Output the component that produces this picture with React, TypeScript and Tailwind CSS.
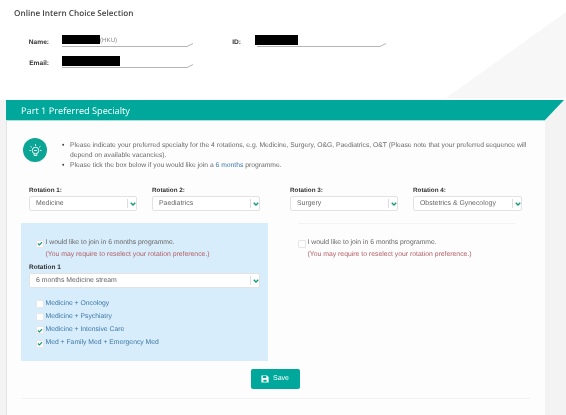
const sans = "font-['Liberation_Sans',Arial,sans-serif]";

function Check({ on, white = true }: { on?: boolean; white?: boolean }) {
  return (
    <span className={`flex h-2 w-2 shrink-0 items-center justify-center rounded-[1px] border border-[#e6e6e6] ${white ? "bg-white" : "bg-[#fdfdfd]"}`}>
      {on && (
        <svg viewBox="0 0 8 8" className="h-[7px] w-[7px]">
          <path d="M1.2 4 L3.2 5.8 L6.8 2.2" fill="none" stroke="#0b9b78" strokeWidth="1.6" />
        </svg>
      )}
    </span>
  );
}

function Select({ value, className }: { value: string; className: string }) {
  return (
    <div className={`flex h-[15px] items-center rounded-[2px] border border-[#e2e2e2] bg-white pl-[6px] text-[6.9px] leading-[13px] text-[#666] ${className}`}>
      <span className="flex-1 truncate">{value}</span>
      <span className="flex h-[9px] w-[9px] items-center justify-center border-l border-[#ddd]">
        <svg viewBox="0 0 8 8" className="ml-[1px] h-[6px] w-[6px]">
          <path d="M1 2.4 L4 5.4 L7 2.4" fill="none" stroke="#0b9b78" strokeWidth="1.8" />
        </svg>
      </span>
    </div>
  );
}

function Rotation({ label, value, className }: { label: string; value: string; className: string }) {
  return (
    <div className={className}>
      <div className="mb-[1px] h-[9px] text-[6.3px] font-bold leading-[10px] text-[#333]">{label}</div>
      <Select value={value} className="w-full" />
    </div>
  );
}

function Info({ label, labelClass, fieldClass, children }: { label: string; labelClass: string; fieldClass: string; children: React.ReactNode }) {
  return (
    <div className="flex items-start">
      <span className={`pt-[2px] text-right text-[6.6px] font-bold leading-[9px] text-[#333] ${labelClass}`}>{label}</span>
      <div className={`relative h-[11px] border-b border-[#b5b5b5] ${fieldClass}`}>
        {children}
        <svg viewBox="0 0 6 4" className="absolute -right-[6px] -bottom-[1px] h-1 w-[6px]">
          <path d="M0 3.5 L6 0.5" stroke="#b5b5b5" strokeWidth="1" fill="none" />
        </svg>
      </div>
    </div>
  );
}

function Option({ label, on }: { label: string; on?: boolean }) {
  return (
    <div className="flex h-[13.3px] items-center gap-[1.5px] text-[6.8px] text-[#3d78a8]">
      <Check on={on} />
      <span>{label}</span>
    </div>
  );
}

function Join({ on, white }: { on?: boolean; white?: boolean }) {
  return (
    <>
      <div className="flex h-[11px] items-center gap-[1.5px] text-[6.8px] text-[#666]">
        <Check on={on} white={white} />
        <span>I would like to join in 6 months programme.</span>
      </div>
      <div className="mt-[1px] pl-[9.5px] text-[6.85px] leading-[10px] text-[#b25a5f]">
        (You may require to reselect your rotation preference.)
      </div>
    </>
  );
}

export default function App() {
  return (
    <div className={`relative h-[415px] w-[566px] overflow-hidden bg-[#f3f3f3] blur-[0.3px] [text-rendering:geometricPrecision] ${sans}`}>
      <div className="relative h-[100px] bg-white">
        <svg viewBox="0 0 120 90" preserveAspectRatio="none" className="absolute right-0 top-[12px] h-[88px] w-[120px]">
          <path d="M0 88 L120 0 V88 Z" fill="#f7f7f7" />
        </svg>
        <div className="relative pl-[14px] pt-[8px] font-['Open_Sans',sans-serif] text-[8.2px] font-semibold leading-[11px] text-[#444]">
          Online Intern Choice Selection
        </div>
        <div className="relative mt-[17px] flex pl-[27px]">
          <Info label="Name:" labelClass="w-[22px]" fieldClass="ml-[13px] w-[125px]">
            <span className="absolute left-0 -top-[1px] h-[9px] w-[38px] bg-black" />
            <span className="absolute left-[38px] top-0 text-[6.2px] leading-[9px] text-[#888]">(HKU)</span>
          </Info>
          <div className="ml-[45px]">
            <Info label="ID:" labelClass="w-[9px]" fieldClass="ml-[16px] w-[123px]">
              <span className="absolute -left-[2px] -top-[1px] h-[10px] w-[43px] bg-black" />
            </Info>
          </div>
        </div>
        <div className="relative mt-[10px] pl-[27px]">
          <Info label="Email:" labelClass="w-[22px]" fieldClass="ml-[13px] w-[125px]">
            <span className="absolute left-0 -top-[1px] h-[10px] w-[58px] bg-black" />
          </Info>
        </div>
      </div>

      <div className="ml-[6px] w-[539px] border-l border-[#e4e4e4] bg-[#fdfdfd]">
        <div className="relative -ml-[1px] h-[20px] w-[558px] bg-[#00a89c] pl-[15px] font-['Open_Sans',sans-serif] text-[9.2px] leading-[21px] text-white [clip-path:polygon(0_0,100%_0,96.6%_100%,0_100%)]">
          Part 1 Preferred Specialty
        </div>
        <div className="h-[1px] bg-[#a8e0db]" />

        <div className="flex pl-[16px] pt-[17px]">
          <div className="flex h-6 w-6 shrink-0 items-center justify-center rounded-full bg-[#0aa595]">
            <svg viewBox="0 0 24 24" className="h-[17px] w-[17px]" fill="none" stroke="#fff" strokeWidth="1.3">
              <circle cx="12" cy="12" r="4.6" />
              <path d="M10 16.5 V19 H14 V16.5 M10 12 H14" />
              <path d="M12 3 V5.5 M5 6 L6.8 7.6 M19 6 L17.2 7.6 M3.5 12 H5.5 M18.5 12 H20.5" />
            </svg>
          </div>
          <ul className="ml-[15px] mt-[3px] w-[474px] text-[6.75px] leading-[10px] text-[#6a6a6a]">
            <li className="flex">
              <span className="w-[8px] shrink-0 text-[#444]">•</span>
              <span>
                Please indicate your preferred specialty for the 4 rotations, e.g. Medicine, Surgery, O&amp;G, Paediatrics, O&amp;T (Please note that your preferred sequence will depend on available vacancies).
              </span>
            </li>
            <li className="flex">
              <span className="w-[8px] shrink-0 text-[#444]">•</span>
              <span>
                Please tick the box below if you would like join a <span className="text-[#3d78a8]">6 months</span> programme.
              </span>
            </li>
          </ul>
        </div>

        <div className="flex pl-[22px] pt-[15px]">
          <Rotation label="Rotation 1:" value="Medicine" className="w-[108px]" />
          <Rotation label="Rotation 2:" value="Paediatrics" className="ml-[15px] w-[108px]" />
          <Rotation label="Rotation 3:" value="Surgery" className="ml-[30px] w-[108px]" />
          <Rotation label="Rotation 4:" value="Obstetrics & Gynecology" className="ml-[15px] w-[109px]" />
        </div>

        <div className="flex pl-[14px] pt-[12px]">
          <div className="h-[138px] w-[247px] bg-[#d8edfb] pl-[8px] pt-[15px]">
            <div className="pl-[7px]">
              <Join on />
            </div>
            <div className="mt-[3px] h-[9px] text-[6.5px] font-bold leading-[9px] text-[#333]">Rotation 1</div>
            <Select value="6 months Medicine stream" className="mt-[1px] w-[231px]" />
            <div className="mt-[9px] pl-[7px]">
              <Option label="Medicine + Oncology" />
              <Option label="Medicine + Psychiatry" />
              <Option label="Medicine + Intensive Care" on />
              <Option label="Med + Family Med + Emergency Med" on />
            </div>
          </div>
          <div className="ml-[30px] w-[217px] border-t border-[#f3f3f3] pt-[14px]">
            <Join white={false} />
          </div>
        </div>

        <div className="flex justify-center pr-[2px] pt-[8px]">
          <div className="flex h-[20px] w-[49px] items-center justify-center gap-[4px] rounded-[2px] bg-[#00a89c] text-[7px] text-white">
            <svg viewBox="0 0 10 10" className="h-2 w-2">
              <path fillRule="evenodd" d="M0.5 0.5 H7.5 L9.5 2.5 V9.5 H0.5 Z M2.3 1.3 V3.6 H6.6 V1.3 Z M3 5.8 V8.5 H7 V5.8 Z" fill="#fff" />
            </svg>
            <span>Save</span>
          </div>
        </div>
        <div className="ml-[14px] mt-[9px] h-[1px] w-[509px] bg-[#f3f3f3]" />
        <div className="h-[20px]" />
      </div>
    </div>
  );
}
